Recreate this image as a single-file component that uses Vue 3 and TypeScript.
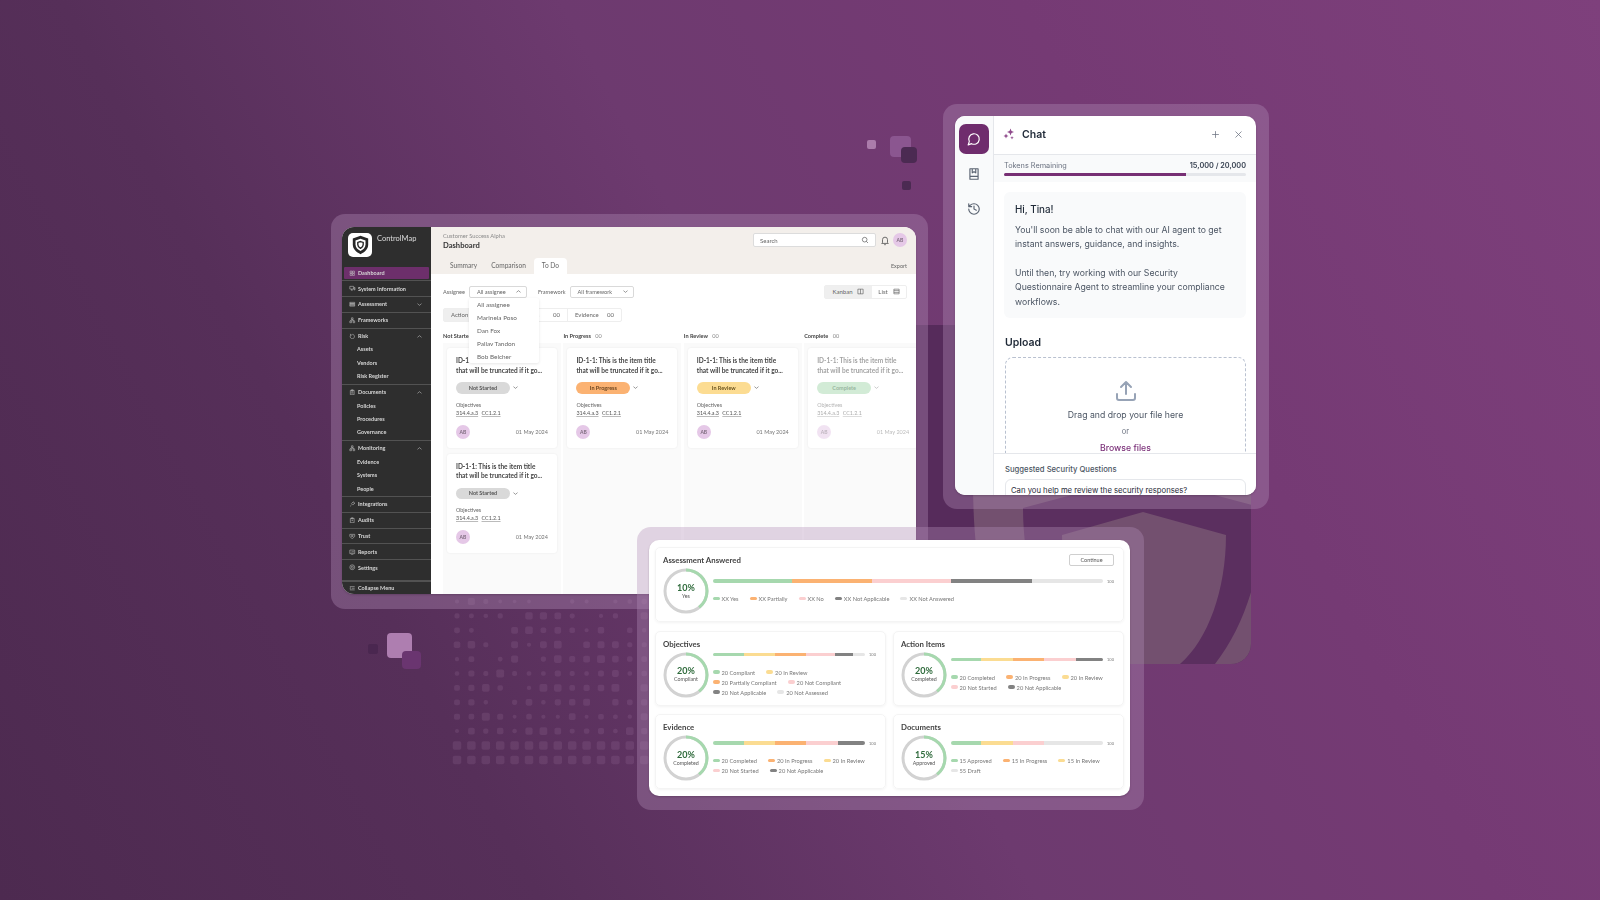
<script setup lang="ts">
interface NavItem {
  label: string;
  icon: string;
  active?: boolean;
  chevron?: "up" | "down";
  children?: string[];
}

interface LegendItem {
  label: string;
  color: string;
}

interface Segment {
  color: string;
  size: number;
}

interface Stat {
  title: string;
  percent: string;
  caption: string;
  segments: Segment[];
  legend: LegendItem[][];
  wide?: boolean;
}

const C = {
  green: "#a6d8ae",
  yellow: "#fbdc92",
  orange: "#fbb272",
  pink: "#fbcfd0",
  dark: "#828282",
  light: "#e6e6e6",
};

const icons: Record<string, string> = {
  grid: "M4 4h7v7H4zM13 4h7v7h-7zM4 13h7v7H4zM13 13h7v7h-7z",
  monitor: "M3 5h14v10H3zM7 19h7M10 15v4M19 9h3v9h-3z",
  list: "M3 5h18v4H3zM3 10h18v4H3zM3 15h18v4H3z",
  nodes: "M9 3h6v6H9zM3 15h6v6H3zM15 15h6v6h-6zM12 9v3M6 15v-3h12v3",
  risk: "M12 5a8 8 0 1 1-6 3M5 3l1 5 5-1",
  file: "M5 5h14v16H5zM9 3h6v4H9zM8 11h8M8 15h8",
  plug: "M4 20l5-5M9 10l5 5 5-5a3.5 3.5 0 0 0-5-5zM16 3l-3 3M21 8l-3 3",
  clip: "M5 5h14v16H5zM9 3h6v4H9zM9 13l2 2 4-4",
  trust: "M3 5h18v8l-9 8-9-8zM8 9h8M8 13h8",
  report: "M3 4h18v13H3zM8 21h8M8 13v-3M12 13V8M16 13v-5",
  gear: "M12 3a9 9 0 1 0 0 18 9 9 0 0 0 0-18zM12 8a4 4 0 1 0 0 8 4 4 0 0 0 0-8z",
  collapse: "M3 6h18M10 12h11M3 18h18M7 9l-4 3 4 3",
};

const navGroups: NavItem[] = [
  { label: "Dashboard", icon: "grid", active: true },
  { label: "System Information", icon: "monitor" },
  { label: "Assessment", icon: "list", chevron: "down" },
  { label: "Frameworks", icon: "nodes" },
  { label: "Risk", icon: "risk", chevron: "up", children: ["Assets", "Vendors", "Risk Register"] },
  { label: "Documents", icon: "file", chevron: "up", children: ["Policies", "Procedures", "Governance"] },
  { label: "Monitoring", icon: "nodes", chevron: "up", children: ["Evidence", "Systems", "People"] },
  { label: "Integrations", icon: "plug" },
  { label: "Audits", icon: "clip" },
  { label: "Trust", icon: "trust" },
  { label: "Reports", icon: "report" },
  { label: "Settings", icon: "gear" },
];

const assignees = ["All assignee", "Marinela Poso", "Dan Fox", "Pallav Tandon", "Bob Belcher"];

const columns = [
  {
    title: "Not Started",
    cards: [
      { status: "Not Started", cls: "grey" },
      { status: "Not Started", cls: "grey" },
    ],
  },
  { title: "In Progress", cards: [{ status: "In Progress", cls: "orange" }] },
  { title: "In Review", cards: [{ status: "In Review", cls: "yellow" }] },
  { title: "Complete", faded: true, cards: [{ status: "Complete", cls: "green" }] },
];

const assessment: Stat = {
  title: "Assessment Answered",
  percent: "10%",
  caption: "Yes",
  wide: true,
  segments: [
    { color: C.green, size: 20.4 },
    { color: C.orange, size: 20.4 },
    { color: C.pink, size: 20.4 },
    { color: C.dark, size: 20.7 },
    { color: C.light, size: 18.1 },
  ],
  legend: [
    [
      { label: "XX Yes", color: C.green },
      { label: "XX Partially", color: C.orange },
      { label: "XX No", color: C.pink },
      { label: "XX Not Applicable", color: C.dark },
      { label: "XX Not Answered", color: C.light },
    ],
  ],
};

const stats: Stat[] = [
  {
    title: "Objectives",
    percent: "20%",
    caption: "Compliant",
    segments: [
      { color: C.green, size: 20.5 },
      { color: C.yellow, size: 20.5 },
      { color: C.orange, size: 20.5 },
      { color: C.pink, size: 19 },
      { color: C.dark, size: 11.5 },
      { color: C.light, size: 8 },
    ],
    legend: [
      [
        { label: "20 Compliant", color: C.green },
        { label: "20 In Review", color: C.yellow },
      ],
      [
        { label: "20 Partially Compliant", color: C.orange },
        { label: "20 Not Compliant", color: C.pink },
      ],
      [
        { label: "20 Not Applicable", color: C.dark },
        { label: "20 Not Assessed", color: C.light },
      ],
    ],
  },
  {
    title: "Action Items",
    percent: "20%",
    caption: "Completed",
    segments: [
      { color: C.green, size: 20.3 },
      { color: C.yellow, size: 20.7 },
      { color: C.orange, size: 20.3 },
      { color: C.pink, size: 20.7 },
      { color: C.dark, size: 18 },
    ],
    legend: [
      [
        { label: "20 Completed", color: C.green },
        { label: "20 In Progress", color: C.orange },
        { label: "20 In Review", color: C.yellow },
      ],
      [
        { label: "20 Not Started", color: C.pink },
        { label: "20 Not Applicable", color: C.dark },
      ],
    ],
  },
  {
    title: "Evidence",
    percent: "20%",
    caption: "Completed",
    segments: [
      { color: C.green, size: 20.5 },
      { color: C.yellow, size: 20.5 },
      { color: C.orange, size: 20.5 },
      { color: C.pink, size: 20.5 },
      { color: C.dark, size: 18 },
    ],
    legend: [
      [
        { label: "20 Completed", color: C.green },
        { label: "20 In Progress", color: C.orange },
        { label: "20 In Review", color: C.yellow },
      ],
      [
        { label: "20 Not Started", color: C.pink },
        { label: "20 Not Applicable", color: C.dark },
      ],
    ],
  },
  {
    title: "Documents",
    percent: "15%",
    caption: "Approved",
    segments: [
      { color: C.green, size: 20.3 },
      { color: C.yellow, size: 20.7 },
      { color: C.pink, size: 20.5 },
      { color: C.light, size: 38.5 },
    ],
    legend: [
      [
        { label: "15 Approved", color: C.green },
        { label: "15 In Progress", color: C.orange },
        { label: "15 In Review", color: C.yellow },
      ],
      [{ label: "55 Draft", color: C.light }],
    ],
  },
];

// halftone field under the windows, sizes from a small hash so it stays stable
const dots: { x: number; y: number; s: number }[] = [];
for (let r = 0; r < 12; r++) {
  for (let c = 0; c < 14; c++) {
    const h = Math.abs(Math.sin((r + 1) * 12.9898 + (c + 1) * 78.233) * 43758.5453) % 1;
    if (r < 8 && h < 0.12) continue;
    const s = r > 9 ? 8.5 : 3 + h * 4.5 + r * 0.1;
    dots.push({ x: 457 + c * 14.4 - s / 2, y: 601.5 + r * 14.4 - s / 2, s });
  }
}

const ringLength = 2 * Math.PI * 21;
</script>

<template>
  <div class="stage">
    <!-- background decoration -->
    <svg class="decor" width="1600" height="900" viewBox="0 0 1600 900" aria-hidden="true">
      <defs>
        <clipPath id="shield-clip">
          <rect x="880" y="325" width="371" height="339" rx="20" />
        </clipPath>
      </defs>
      <g clip-path="url(#shield-clip)">
        <rect x="880" y="325" width="371" height="339" fill="#562b5b" />
        <path d="M1143 430L1330 482V560C1330 640 1280 690 1230 720H1050C1000 680 973 600 973 482Z" fill="#73506f" />
        <path d="M1143 476L1263 508C1263 570 1245 625 1215 664L1190 700H1095C1050 660 1023 580 1023 508Z" fill="#5b2f5f" />
        <path d="M1143 512L1226 535C1226 590 1208 640 1180 664L1160 690H1125C1085 650 1062 595 1062 535Z" fill="#73506f" />
      </g>
      <rect
        v-for="(d, i) in dots"
        :key="i"
        :x="d.x"
        :y="d.y"
        :width="d.s"
        :height="d.s"
        rx="1.8"
        fill="rgba(205,165,205,0.12)"
      />
      <rect x="867" y="140" width="9" height="9" rx="2" fill="#ab7cab" />
      <rect x="890" y="136" width="21" height="21" rx="4" fill="#8b5690" />
      <rect x="901" y="147" width="16" height="16" rx="4" fill="#4b2a52" />
      <rect x="902" y="181" width="9" height="9" rx="2" fill="#4b2a52" />
      <rect x="368" y="644" width="10" height="10" rx="2" fill="#4a2750" />
      <rect x="387" y="633" width="25" height="25" rx="4" fill="#ae7eb0" />
      <rect x="402" y="651" width="19" height="18" rx="4" fill="#6a3570" />
    </svg>

    <!-- main app window -->
    <div class="halo halo-main"></div>
    <section class="win app">
      <aside class="side">
        <div class="brand">
          <div class="logo">
            <svg width="19" height="20" viewBox="0 0 24 26">
              <path d="M12 1l10 3.500v8c0 6-4.500 10-10 12.500C6.500 22.500 2 18.500 2 12.500v-8z" fill="#262626" />
              <path d="M12 5l6.500 2.200v5.300c0 4-3 6.700-6.500 8.400-3.500-1.700-6.500-4.400-6.500-8.400V7.200z" fill="#fff" />
              <path d="M12 8.500l3.500 1.200v3c0 2.200-1.600 3.600-3.500 4.600-1.900-1-3.500-2.400-3.500-4.600v-3z" fill="none" stroke="#262626" stroke-width="1.800" />
            </svg>
          </div>
          <span class="brand-name">ControlMap</span>
        </div>
        <nav class="nav">
          <div v-for="g in navGroups" :key="g.label" class="nav-group">
            <div class="nav-row" :class="{ active: g.active }">
              <svg class="nav-icon" viewBox="0 0 24 24"><path :d="icons[g.icon]" /></svg>
              <span>{{ g.label }}</span>
              <svg v-if="g.chevron" class="nav-chev" viewBox="0 0 24 24">
                <path :d="g.chevron === 'up' ? 'M5 15l7-6 7 6' : 'M5 9l7 6 7-6'" />
              </svg>
            </div>
            <div v-for="c in g.children" :key="c" class="nav-child">{{ c }}</div>
          </div>
        </nav>
        <div class="collapse">
          <svg class="nav-icon" viewBox="0 0 24 24"><path :d="icons.collapse" /></svg>
          <span>Collapse Menu</span>
        </div>
      </aside>

      <div class="main">
        <header class="top">
          <div class="top-row">
            <div class="crumbs">
              <div class="crumb-org">Customer Success Alpha</div>
              <div class="crumb-page">Dashboard</div>
            </div>
            <div class="search">
              <span>Search</span>
              <svg width="8" height="8" viewBox="0 0 24 24" class="stroke-icon">
                <circle cx="11" cy="11" r="7" />
                <path d="M16 16l5 5" />
              </svg>
            </div>
            <svg class="bell stroke-icon" width="10" height="11" viewBox="0 0 24 24">
              <path d="M6 17V10a6 6 0 0 1 12 0v7l2 2H4zM10 22h4" />
            </svg>
            <div class="avatar">AB</div>
          </div>
          <div class="tabs">
            <span class="tab">Summary</span>
            <span class="tab">Comparison</span>
            <span class="tab current">To Do</span>
            <span class="export">Export</span>
          </div>
        </header>

        <div class="content">
          <div class="filters">
            <span class="f-label">Assignee</span>
            <div class="select sel-a">
              <span>All assignee</span>
              <svg class="chev" viewBox="0 0 24 24"><path d="M5 15l7-6 7 6" /></svg>
            </div>
            <span class="f-label f-second">Framework</span>
            <div class="select sel-b">
              <span>All framework</span>
              <svg class="chev" viewBox="0 0 24 24"><path d="M5 9l7 6 7-6" /></svg>
            </div>
            <div class="view">
              <span class="view-btn on">
                Kanban
                <svg class="stroke-icon" width="7" height="7" viewBox="0 0 24 24"><path d="M3 4h18v16H3zM12 4v16" /></svg>
              </span>
              <span class="view-btn">
                List
                <svg class="stroke-icon" width="7" height="7" viewBox="0 0 24 24"><path d="M3 4h18v16H3zM3 9h18M3 15h18" /></svg>
              </span>
            </div>
          </div>

          <div class="chips">
            <span class="chip c-on">Action Items</span>
            <span class="chip c-mid">Documents <b>00</b></span>
            <span class="chip c-last">Evidence <b>00</b></span>
          </div>

          <div class="board">
            <div v-for="col in columns" :key="col.title" class="col">
              <div class="col-title">{{ col.title }} <span>00</span></div>
              <div class="col-body" :class="{ faded: col.faded }">
                <article v-for="(card, i) in col.cards" :key="i" class="card">
                  <h4 class="card-title">ID-1-1: This is the item title<br />that will be truncated if it go...</h4>
                  <div class="status-row">
                    <span class="pill" :class="card.cls">{{ card.status }}</span>
                    <svg class="chev" viewBox="0 0 24 24"><path d="M5 9l7 6 7-6" /></svg>
                  </div>
                  <div class="obj">Objectives</div>
                  <div class="refs"><u>314.4.a.3</u> <u>CC1.2.1</u></div>
                  <div class="card-foot">
                    <span class="avatar">AB</span>
                    <span class="date">01 May 2024</span>
                  </div>
                </article>
              </div>
            </div>
          </div>

          <ul class="menu">
            <li v-for="a in assignees" :key="a">{{ a }}</li>
          </ul>
        </div>
      </div>
    </section>

    <!-- chat window -->
    <div class="halo halo-chat"></div>
    <section class="win chat">
      <aside class="chat-side">
        <button class="rail active">
          <svg width="14" height="14" viewBox="0 0 24 24"><path d="M7.900 20A9 9 0 1 0 4 16.100L2 22Z" /></svg>
        </button>
        <button class="rail">
          <svg width="14" height="14" viewBox="0 0 24 24"><path d="M5 3h14v18H5zM5 16h14M9 3v7l3-2 3 2V3" /></svg>
        </button>
        <button class="rail">
          <svg width="14" height="14" viewBox="0 0 24 24">
            <path d="M3 12a9 9 0 1 0 9-9 9.750 9.750 0 0 0-6.740 2.740L3 8M3 3v5h5M12 7v5l4 2" />
          </svg>
        </button>
      </aside>
      <div class="chat-main">
        <header class="chat-head">
          <svg width="12" height="12" viewBox="0 0 24 24" class="spark">
            <path d="M15 1l2 5 5 2-5 2-2 5-2-5-5-2 5-2zM6 11l1.500 3.500L11 16l-3.500 1.500L6 21l-1.500-3.500L1 16l3.500-1.500zM18 16l1 2.500 2.500 1-2.500 1-1 2.500-1-2.500-2.500-1 2.500-1z" />
          </svg>
          <span class="chat-title">Chat</span>
          <svg class="head-btn" width="9" height="9" viewBox="0 0 24 24"><path d="M12 3v18M3 12h18" /></svg>
          <svg class="head-btn" width="9" height="9" viewBox="0 0 24 24"><path d="M4 4l16 16M20 4L4 20" /></svg>
        </header>
        <div class="tokens">
          <div class="tokens-row">
            <span>Tokens Remaining</span>
            <b>15,000 / 20,000</b>
          </div>
          <div class="tokens-bar"><div class="tokens-fill" :style="{ width: 75 + '%' }"></div></div>
        </div>
        <div class="chat-scroll">
          <div class="hello">
            <h3>Hi, Tina!</h3>
            <p>You'll soon be able to chat with our AI agent to get instant answers, guidance, and insights.</p>
            <p>Until then, try working with our Security Questionnaire Agent to streamline your compliance workflows.</p>
          </div>
          <h3 class="upload-title">Upload</h3>
          <div class="drop">
            <svg width="24" height="24" viewBox="0 0 24 24">
              <path d="M21 15v4a2 2 0 0 1-2 2H5a2 2 0 0 1-2-2v-4M17 8l-5-5-5 5M12 3v12" />
            </svg>
            <div class="drop-text">Drag and drop your file here</div>
            <div class="drop-or">or</div>
            <div class="drop-link">Browse files</div>
          </div>
        </div>
        <footer class="chat-foot">
          <div class="foot-title">Suggested Security Questions</div>
          <div class="question">Can you help me review the security responses?</div>
        </footer>
      </div>
    </section>

    <!-- compliance summary window -->
    <div class="halo halo-stats"></div>
    <section class="win stats">
      <div
        v-for="s in [assessment, ...stats]"
        :key="s.title"
        class="stat"
        :class="{ wide: s.wide }"
      >
        <div class="stat-head">
          <h4>{{ s.title }}</h4>
          <button v-if="s.wide" class="continue">Continue</button>
        </div>
        <div class="stat-body">
          <div class="ring">
            <svg width="46" height="46" viewBox="0 0 46 46">
              <circle cx="23" cy="23" r="21" fill="none" stroke="#d2d2d2" stroke-width="3" />
              <circle
                cx="23"
                cy="23"
                r="21"
                fill="none"
                stroke="#a6d8ae"
                stroke-width="3"
                transform="rotate(-90 23 23)"
                :stroke-dasharray="`${ringLength * 0.39} ${ringLength}`"
              />
            </svg>
            <div class="ring-text">
              <b>{{ s.percent }}</b>
              <span>{{ s.caption }}</span>
            </div>
          </div>
          <div class="stat-right">
            <div class="bar-row">
              <div class="bar">
                <i
                  v-for="(seg, i) in s.segments"
                  :key="i"
                  :style="{ width: seg.size + '%', background: seg.color }"
                ></i>
              </div>
              <span class="bar-max">100</span>
            </div>
            <div class="legend">
              <div v-for="(row, i) in s.legend" :key="i" class="legend-row">
                <span v-for="l in row" :key="l.label" class="legend-item">
                  <i :style="{ background: l.color }"></i>{{ l.label }}
                </span>
              </div>
            </div>
          </div>
        </div>
      </div>
    </section>
  </div>
</template>

<style>
html,
body {
  margin: 0;
  background: #5a2f5c;
}
</style>

<style scoped>
.stage {
  position: relative;
  width: 1600px;
  height: 900px;
  overflow: hidden;
  font-family: Lato, "Liberation Sans", sans-serif;
  color: #444;
  background: linear-gradient(62deg, #4d2a50 0%, #562f59 26%, #6d3a6f 50%, #753a74 72%, #7e407c 100%);
}

.decor {
  position: absolute;
  inset: 0;
}

/* windows sit on a free canvas */
.halo {
  position: absolute;
  border-radius: 14px;
  background: rgba(178, 141, 183, 0.36);
}

.halo-main {
  left: 331px;
  top: 214px;
  width: 597px;
  height: 395px;
}

.halo-chat {
  left: 943px;
  top: 104px;
  width: 326px;
  height: 405px;
}

.halo-stats {
  left: 637px;
  top: 527px;
  width: 507px;
  height: 283px;
}

.win {
  position: absolute;
  background: #fff;
  overflow: hidden;
  filter: blur(0.45px);
  box-shadow: 0 1px 2px rgba(40, 20, 40, 0.25);
}

/* ---------- app ---------- */
.app {
  left: 342px;
  top: 227px;
  width: 574px;
  height: 367px;
  border-radius: 12px 12px 0 12px;
  display: flex;
}

.side {
  width: 89px;
  flex: none;
  background: #2e2e2e;
  color: #d6d6d6;
  display: flex;
  flex-direction: column;
  font-size: 5.5px;
}

.brand {
  height: 38.500px;
  flex: none;
  display: flex;
  align-items: flex-start;
  padding: 6px 0 0 6px;
  box-sizing: border-box;
}

.logo {
  width: 24px;
  height: 24px;
  background: #fff;
  border-radius: 5px;
  display: flex;
  align-items: center;
  justify-content: center;
}

.brand-name {
  margin: 1px 0 0 5px;
  font-size: 7.500px;
  color: #ddd;
}

.nav-group {
  border-bottom: 1px solid #525252;
}

.nav-group:last-child {
  border-bottom: 0;
}

.nav-row {
  height: 14.800px;
  display: flex;
  align-items: center;
  padding: 0 6px 0 7px;
  gap: 2.500px;
  font-weight: 700;
}

.nav-row.active {
  margin: 1.500px 2px;
  height: 11.800px;
  padding: 0 4px 0 5px;
  background: #6d2f6b;
  border-radius: 1px;
}

.nav-icon {
  width: 6.500px;
  height: 6.500px;
  flex: none;
  fill: none;
  stroke: #c8c8c8;
  stroke-width: 2;
}

.nav-chev {
  width: 7px;
  height: 7px;
  margin-left: auto;
  margin-right: 2px;
  fill: none;
  stroke: #bdbdbd;
  stroke-width: 2;
}

.nav-child {
  height: 13.450px;
  line-height: 13.450px;
  padding-left: 15px;
  font-weight: 700;
}

.collapse {
  margin-top: auto;
  border-top: 2px solid #525252;
  height: 12px;
  display: flex;
  align-items: center;
  gap: 2.500px;
  padding-left: 7px;
  font-weight: 700;
}

.main {
  flex: 1;
  min-width: 0;
  display: flex;
  flex-direction: column;
}

.top {
  height: 47px;
  flex: none;
  background: #f3efeb;
  display: flex;
  flex-direction: column;
  justify-content: space-between;
}

.top-row {
  display: flex;
  align-items: flex-start;
  padding: 6px 9px 0 12px;
}

.crumbs {
  flex: 1;
}

.crumb-org {
  font-size: 5.800px;
  color: #8a8a8a;
  line-height: 7px;
  margin-top: -1px;
}

.crumb-page {
  margin-top: 2px;
  font-size: 7.600px;
  font-weight: 700;
  color: #333;
  line-height: 9px;
}

.search {
  width: 123px;
  height: 14px;
  box-sizing: border-box;
  background: #fff;
  border: 1px solid #dcdcdc;
  border-radius: 2px;
  display: flex;
  align-items: center;
  justify-content: space-between;
  padding: 0 6px;
  font-size: 6px;
  color: #666;
}

.stroke-icon {
  fill: none;
  stroke: #555;
  stroke-width: 2;
}

.bell {
  margin: 1.500px 3px 0 4px;
}

.avatar {
  width: 14px;
  height: 14px;
  border-radius: 50%;
  background: #e5c8e7;
  color: #7c6a7c;
  font-size: 5px;
  font-weight: 700;
  display: flex;
  align-items: center;
  justify-content: center;
  flex: none;
}

.tabs {
  height: 16px;
  display: flex;
  align-items: center;
  padding: 0 9px 0 12px;
  font-size: 6.600px;
  color: #666;
}

.tab {
  height: 16px;
  line-height: 15px;
  padding: 0 7px;
  box-sizing: border-box;
}

.tab.current {
  background: #fff;
  border-radius: 4px 4px 0 0;
  margin-left: 1px;
  padding: 0 8px;
}

.export {
  margin-left: auto;
  font-size: 5.500px;
  color: #666;
}

.content {
  position: relative;
  flex: 1;
  min-height: 0;
  padding: 10.500px 9px 0 12px;
  font-size: 6px;
}

.filters {
  display: flex;
  align-items: center;
  height: 14px;
}

.f-label {
  font-size: 5.600px;
  color: #666;
  margin-right: 4px;
}

.f-second {
  margin-left: 11px;
}

.select {
  height: 12px;
  box-sizing: border-box;
  border: 1px solid #d9d9d9;
  border-radius: 2px;
  display: flex;
  align-items: center;
  justify-content: space-between;
  padding: 0 4px 0 7px;
  font-size: 5.600px;
  color: #666;
}

.sel-a {
  width: 58px;
}

.sel-b {
  width: 64px;
}

.chev {
  width: 7px;
  height: 7px;
  fill: none;
  stroke: #555;
  stroke-width: 2;
}

.view {
  margin-left: auto;
  display: flex;
  height: 14px;
  border: 1px solid #eee;
  border-radius: 2px;
  box-sizing: border-box;
  font-size: 6px;
  color: #666;
}

.view-btn {
  display: flex;
  align-items: center;
  justify-content: center;
  gap: 5px;
  width: 34px;
}

.view-btn.on {
  width: 47px;
  background: #efefef;
}

.chips {
  display: flex;
  height: 14px;
  width: 179px;
  margin-top: 9px;
  border: 1px solid #eee;
  border-radius: 2px;
  box-sizing: border-box;
  font-size: 6px;
  color: #666;
}

.chip {
  display: flex;
  align-items: center;
  justify-content: space-between;
  padding: 0 7px;
  box-sizing: border-box;
}

.chip b {
  font-weight: 400;
}

.c-on {
  width: 58px;
  background: #efefef;
}

.c-mid {
  width: 66px;
  border-right: 1px solid #eee;
}

.c-last {
  flex: 1;
}

.board {
  display: flex;
  gap: 2.400px;
  margin-top: 8.500px;
  width: 490px;
}

.col {
  width: 118px;
  flex: none;
}

.col-title {
  height: 13px;
  font-size: 5.600px;
  font-weight: 700;
  color: #444;
  line-height: 11px;
}

.col-title span {
  margin-left: 3px;
  font-weight: 400;
  color: #888;
}

.col-body {
  height: 252px;
  background: #fafafa;
  padding: 5px 4px;
  box-sizing: border-box;
  display: flex;
  flex-direction: column;
  gap: 6px;
}

.card {
  background: #fff;
  border-radius: 3px;
  width: 110px;
  height: 99.500px;
  box-sizing: border-box;
  padding: 8px 9px 0;
  box-shadow: 0 0 2px rgba(0, 0, 0, 0.08);
}

.faded .card > * {
  opacity: 0.5;
}

.card-title {
  margin: 0;
  font-size: 6.500px;
  line-height: 9.500px;
  font-weight: 700;
  color: #444;
  white-space: nowrap;
}

.status-row {
  display: flex;
  align-items: center;
  gap: 2px;
  margin-top: 7px;
}

.pill {
  width: 54px;
  height: 11.500px;
  border-radius: 6px;
  display: flex;
  align-items: center;
  justify-content: center;
  font-size: 5.500px;
  font-weight: 700;
  color: #555;
}

.pill.grey {
  background: #d9d9d9;
}

.pill.orange {
  background: #fbb272;
  color: #6b4520;
}

.pill.yellow {
  background: #fcdc92;
  color: #6b5520;
}

.pill.green {
  background: #a6d8ae;
  color: #2f6b3c;
}

.obj {
  margin-top: 8px;
  font-size: 5.400px;
  line-height: 7px;
  color: #666;
}

.refs {
  font-size: 5.400px;
  line-height: 8px;
  color: #555;
  word-spacing: 2px;
}

.refs u {
  text-decoration-color: #bbb;
}

.card-foot {
  margin-top: 8px;
  display: flex;
  align-items: center;
  justify-content: space-between;
}

.date {
  font-size: 5.500px;
  color: #777;
}

.menu {
  position: absolute;
  left: 38px;
  top: 24px;
  width: 70px;
  height: 65px;
  margin: 0;
  padding: 0;
  list-style: none;
  background: #fff;
  border-radius: 2px;
  box-shadow: 0 1px 3px rgba(0, 0, 0, 0.1);
  box-sizing: border-box;
  font-size: 6.400px;
  color: #666;
}

.menu li {
  height: 13px;
  line-height: 13px;
  padding-left: 8px;
}

/* ---------- chat ---------- */
.chat {
  left: 955px;
  top: 116px;
  width: 301px;
  height: 379px;
  border-radius: 10px;
  display: flex;
  font-family: Inter, "Liberation Sans", sans-serif;
}

.chat-side {
  width: 39px;
  flex: none;
  background: #f9fafb;
  border-right: 1px solid #e5e7eb;
  box-sizing: border-box;
  display: flex;
  flex-direction: column;
  align-items: center;
  padding-top: 8px;
  gap: 5px;
}

.rail {
  width: 30px;
  height: 30px;
  padding: 0;
  border: 0;
  border-radius: 7px;
  background: none;
  display: flex;
  align-items: center;
  justify-content: center;
}

.rail svg {
  fill: none;
  stroke: #5b6472;
  stroke-width: 2;
  stroke-linecap: round;
  stroke-linejoin: round;
}

.rail.active {
  background: #6f2c6d;
}

.rail.active svg {
  stroke: #fff;
}

.chat-main {
  flex: 1;
  min-width: 0;
  display: flex;
  flex-direction: column;
}

.chat-head {
  height: 39px;
  flex: none;
  box-sizing: border-box;
  display: flex;
  align-items: center;
  padding: 0 13px 2px 9px;
  border-bottom: 1px solid #e5e7eb;
}

.spark {
  fill: #8f4a8c;
}

.chat-title {
  margin-left: 7px;
  margin-right: auto;
  font-size: 10.500px;
  font-weight: 600;
  color: #1f2937;
}

.head-btn {
  fill: none;
  stroke: #6b7280;
  stroke-width: 2;
  margin-left: 14px;
}

.tokens {
  height: 27px;
  flex: none;
  box-sizing: border-box;
  background: #f9fafb;
  padding: 6px 10px 0;
}

.tokens-row {
  display: flex;
  justify-content: space-between;
  font-size: 7.300px;
  line-height: 10px;
  color: #6b7280;
}

.tokens-row b {
  font-weight: 600;
  color: #374151;
}

.tokens-bar {
  margin-top: 1.500px;
  height: 3.500px;
  border-radius: 2px;
  background: #e5e7eb;
  overflow: hidden;
}

.tokens-fill {
  height: 100%;
  background: #772f74;
}

.chat-scroll {
  flex: 1;
  min-height: 0;
  overflow: hidden;
  padding: 10px 10px 0;
}

.hello {
  height: 126px;
  box-sizing: border-box;
  background: #f9fafb;
  border-radius: 6px;
  padding: 11px 11px 0;
  font-size: 8.700px;
  line-height: 14.300px;
  color: #4b5563;
}

.hello h3 {
  margin: 0 0 7px;
  font-size: 9.800px;
  line-height: 13px;
  font-weight: 500;
  color: #1f2937;
}

.hello p {
  margin: 0 0 14.500px;
}

.upload-title {
  margin: 18px 0 7px 1px;
  font-size: 10.500px;
  line-height: 14px;
  font-weight: 600;
  color: #1f2937;
}

.drop {
  margin-left: 1px;
  height: 110px;
  box-sizing: border-box;
  border: 1px dashed #b9c1d0;
  border-radius: 8px;
  display: flex;
  flex-direction: column;
  align-items: center;
  padding-top: 21px;
}

.drop svg {
  fill: none;
  stroke: #97a3b6;
  stroke-width: 2;
  stroke-linecap: round;
  stroke-linejoin: round;
}

.drop-text {
  margin-top: 6px;
  font-size: 8.700px;
  line-height: 12px;
  color: #4b5563;
}

.drop-or {
  margin-top: 5px;
  font-size: 7.500px;
  line-height: 11px;
  color: #6b7280;
}

.drop-link {
  margin-top: 5px;
  font-size: 8.700px;
  line-height: 12px;
  font-weight: 500;
  color: #7a2f78;
}

.chat-foot {
  height: 42px;
  flex: none;
  box-sizing: border-box;
  border-top: 1px solid #e5e7eb;
  background: #fff;
  padding: 10px 10px 0 11px;
}

.foot-title {
  font-size: 7.700px;
  line-height: 11px;
  font-weight: 500;
  color: #4b5563;
}

.question {
  margin-top: 4px;
  height: 24px;
  box-sizing: border-box;
  border: 1px solid #e5e7eb;
  border-radius: 6px;
  padding: 4.500px 5px;
  font-size: 7.700px;
  line-height: 11px;
  color: #1f2937;
}

/* ---------- stats ---------- */
.stats {
  left: 649px;
  top: 540px;
  width: 481px;
  height: 256px;
  border-radius: 10px;
  box-sizing: border-box;
  padding: 7px 6px;
  display: grid;
  grid-template-columns: 231px 231px;
  grid-template-rows: 75px 75px 75px;
  justify-content: space-between;
  align-content: space-between;
}

.stat {
  border: 1px solid #f4f4f4;
  border-radius: 5px;
  box-shadow: 0 1px 3px rgba(0, 0, 0, 0.05);
  box-sizing: border-box;
  padding: 7px 8px 7px 7px;
  display: flex;
  flex-direction: column;
}

.stat.wide {
  grid-column: 1 / 3;
}

.stat-head {
  display: flex;
  align-items: flex-start;
  justify-content: space-between;
  height: 14px;
}

.stat-head h4 {
  margin: 0;
  font-size: 7.800px;
  line-height: 11px;
  font-weight: 700;
  color: #444;
}

.continue {
  width: 45px;
  height: 12px;
  margin-right: 1px;
  margin-top: -1px;
  padding: 0;
  background: #fff;
  border: 1px solid #cfcfcf;
  border-radius: 2px;
  font: 5.500px Lato, sans-serif;
  color: #555;
}

.stat-body {
  display: flex;
  gap: 3.500px;
  flex: 1;
  align-items: center;
}

.ring {
  position: relative;
  width: 46px;
  height: 46px;
  flex: none;
}

.ring svg {
  display: block;
}

.ring-text {
  position: absolute;
  inset: 0;
  display: flex;
  flex-direction: column;
  align-items: center;
  justify-content: center;
}

.ring-text b {
  font-size: 9px;
  line-height: 10px;
  font-weight: 700;
  color: #2f6b3c;
}

.ring-text span {
  font-size: 5.300px;
  line-height: 7px;
  color: #555;
}

.stat-right {
  flex: 1;
  min-width: 0;
  margin-right: 1px;
}

.bar-row {
  display: flex;
  align-items: center;
  gap: 4px;
}

.bar {
  flex: 1;
  height: 3.500px;
  display: flex;
  border-radius: 2px;
  overflow: hidden;
}

.bar i {
  display: block;
  height: 100%;
}

.bar-max {
  width: 7px;
  font-size: 4px;
  line-height: 5px;
  color: #777;
}

.legend {
  margin-top: 10px;
  display: flex;
  flex-direction: column;
}

.legend-row {
  display: flex;
  gap: 11px;
  height: 10px;
  align-items: center;
}

.legend-item {
  display: inline-flex;
  align-items: center;
  font-size: 5.700px;
  color: #777;
  white-space: nowrap;
}

.legend-item i {
  width: 7px;
  height: 3.500px;
  border-radius: 2px;
  margin-right: 2px;
}
</style>
